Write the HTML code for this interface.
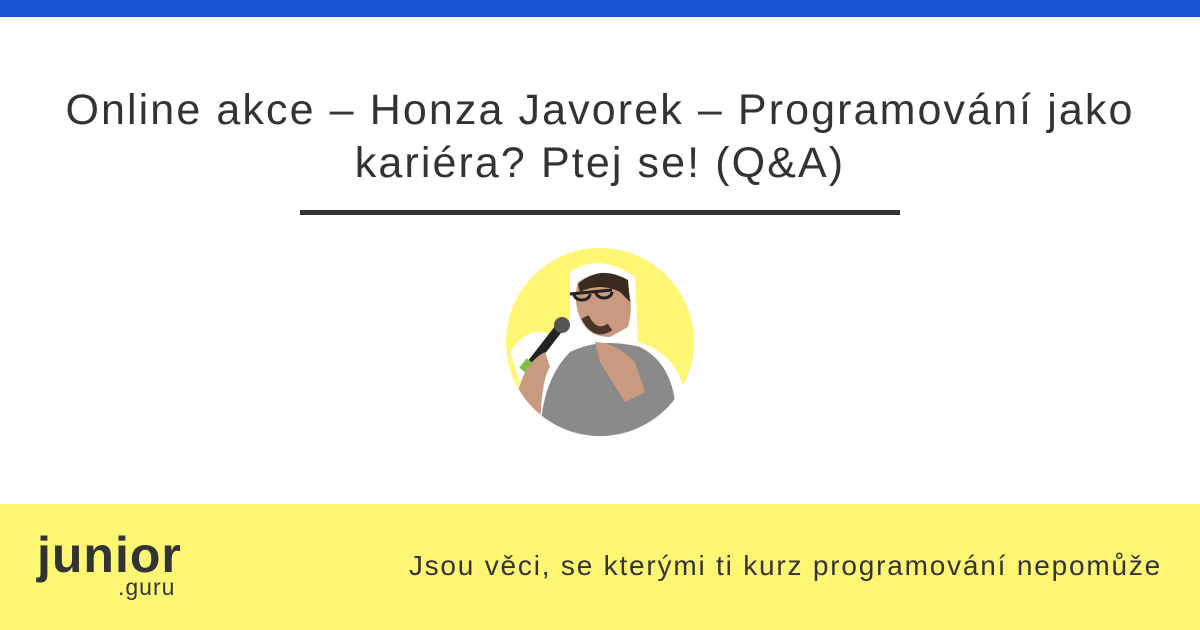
<!DOCTYPE html>
<html><head><meta charset="utf-8"><style>
body{margin:0;width:1200px;height:630px;position:relative;background:#fff;font-family:"Liberation Sans",sans-serif;overflow:hidden}
.top{position:absolute;left:0;top:0;width:1200px;height:17px;background:#1755d1}
h1{position:absolute;left:0;top:84px;width:1200px;margin:0;text-align:center;font-weight:400;font-size:43px;letter-spacing:2.1px;line-height:53px;color:#333}
.bar{position:absolute;left:300px;top:210px;width:600px;height:5px;background:#333}
.foot{position:absolute;left:0;top:504px;width:1200px;height:126px;background:#fff774}
.logo{position:absolute;left:37px;top:526px;font-size:50px;font-weight:700;color:#333;letter-spacing:1px}
.guru{position:absolute;left:118px;top:574px;font-size:23px;color:#333;letter-spacing:1px}
.tag{position:absolute;right:38px;top:550px;font-size:28px;letter-spacing:1.8px;color:#333}
</style></head><body>
<div class="top"></div>
<h1>Online akce – Honza Javorek – Programování jako<br>kariéra? Ptej se! (Q&amp;A)</h1>
<div class="bar"></div>
<svg style="position:absolute;left:500px;top:242px" width="200" height="200" viewBox="0 0 200 200">
<defs><clipPath id="c"><circle cx="100" cy="100" r="94"/></clipPath></defs>
<circle cx="100" cy="100" r="94" fill="#fff774"/>
<g clip-path="url(#c)">
<path d="M70 30 Q100 10 135 35 L138 100 Q175 110 185 150 L190 200 L30 200 L20 140 L10 110 Q30 80 55 95 L70 85 Z" fill="#fff"/>
<path d="M40 200 Q40 140 70 110 Q100 95 140 105 Q170 120 175 160 L180 200 Z" fill="#8a8a8a"/>
<path d="M78 40 Q100 25 125 38 Q135 60 128 85 L110 95 Q90 95 82 80 Q72 60 78 40Z" fill="#c99a80"/>
<path d="M78 42 Q100 22 128 38 L130 60 L120 50 Q100 40 80 50Z" fill="#3a2a20"/>
<path d="M70 52 L112 48 M74 52 a8 6 0 1 0 16 0 M96 50 a8 6 0 1 0 16 0" stroke="#222" stroke-width="3" fill="none"/>
<path d="M85 75 Q95 95 110 85" stroke="#4a3528" stroke-width="8" fill="none"/>
<path d="M95 100 Q115 100 135 120 L145 150 L125 160 L100 120Z" fill="#c99a80"/>
<path d="M25 130 L60 85" stroke="#222" stroke-width="9"/>
<circle cx="62" cy="83" r="8" fill="#555"/>
<rect x="22" y="118" width="10" height="12" fill="#7ac043" transform="rotate(38 27 124)"/>
<path d="M18 150 Q25 120 45 110 L50 125 Q40 140 40 200 L20 200Z" fill="#c99a80"/>
</g>
</svg>
<div class="foot"></div>
<div class="logo">junior</div>
<div class="guru">.guru</div>
<div class="tag">Jsou věci, se kterými ti kurz programování nepomůže</div>
</body></html>
